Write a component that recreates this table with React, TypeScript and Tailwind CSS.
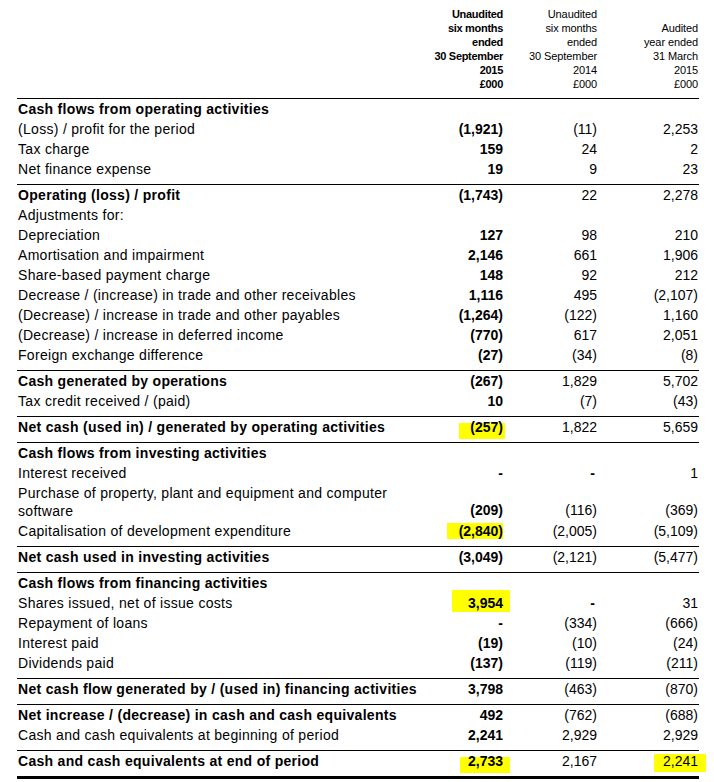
import React from 'react'

type Row = { label: React.ReactNode; bold?: boolean; v?: string[]; hl?: (string | null)[]; tall?: boolean }

const cols = 'grid grid-cols-[396px_90px_94px_102px]'

const groups: Row[][] = [
  [
    { label: 'Cash flows from operating activities', bold: true },
    { label: '(Loss) / profit for the period', v: ['(1,921)', '(11)', '2,253'] },
    { label: 'Tax charge', v: ['159', '24', '2'] },
    { label: 'Net finance expense', v: ['19', '9', '23'] },
  ],
  [
    { label: 'Operating (loss) / profit', bold: true, v: ['(1,743)', '22', '2,278'] },
    { label: 'Adjustments for:' },
    { label: 'Depreciation', v: ['127', '98', '210'] },
    { label: 'Amortisation and impairment', v: ['2,146', '661', '1,906'] },
    { label: 'Share-based payment charge', v: ['148', '92', '212'] },
    { label: 'Decrease / (increase) in trade and other receivables', v: ['1,116', '495', '(2,107)'] },
    { label: '(Decrease) / increase in trade and other payables', v: ['(1,264)', '(122)', '1,160'] },
    { label: '(Decrease) / increase in deferred income', v: ['(770)', '617', '2,051'] },
    { label: 'Foreign exchange difference', v: ['(27)', '(34)', '(8)'] },
  ],
  [
    { label: 'Cash generated by operations', bold: true, v: ['(267)', '1,829', '5,702'] },
    { label: 'Tax credit received / (paid)', v: ['10', '(7)', '(43)'] },
  ],
  [
    {
      label: 'Net cash (used in) / generated by operating activities', bold: true, v: ['(257)', '1,822', '5,659'],
      hl: ['top-[6px] h-[16px] right-[-2px] w-[46px]', null, null],
    },
  ],
  [
    { label: 'Cash flows from investing activities', bold: true },
    { label: 'Interest received', v: ['-', '-', '1'] },
    { label: <>Purchase of property, plant and equipment and computer<br />software</>, tall: true, v: ['(209)', '(116)', '(369)'] },
    {
      label: 'Capitalisation of development expenditure', v: ['(2,840)', '(2,005)', '(5,109)'],
      hl: ['top-[2px] h-[16px] right-0 w-[56px]', null, null],
    },
  ],
  [
    { label: 'Net cash used in investing activities', bold: true, v: ['(3,049)', '(2,121)', '(5,477)'] },
  ],
  [
    { label: 'Cash flows from financing activities', bold: true },
    {
      label: 'Shares issued, net of issue costs', v: ['3,954', '-', '31'],
      hl: ['top-[-3px] h-[22px] right-[-7px] w-[58px]', null, null],
    },
    { label: 'Repayment of loans', v: ['-', '(334)', '(666)'] },
    { label: 'Interest paid', v: ['(19)', '(10)', '(24)'] },
    { label: 'Dividends paid', v: ['(137)', '(119)', '(211)'] },
  ],
  [
    { label: 'Net cash flow generated by / (used in) financing activities', bold: true, v: ['3,798', '(463)', '(870)'] },
  ],
  [
    { label: 'Net increase / (decrease) in cash and cash equivalents', bold: true, v: ['492', '(762)', '(688)'] },
    { label: 'Cash and cash equivalents at beginning of period', v: ['2,241', '2,929', '2,929'] },
  ],
  [
    {
      label: 'Cash and cash equivalents at end of period', bold: true, v: ['2,733', '2,167', '2,241'],
      hl: ['top-[6px] h-[16px] right-[-7px] w-[50px]', null, 'top-[3px] h-[18px] right-[-7px] w-[52px]'],
    },
  ],
]

const heads = [
  ['Unaudited', 'six months', 'ended', '30 September', '2015', '£000'],
  ['Unaudited', 'six months', 'ended', '30 September', '2014', '£000'],
  ['Audited', 'year ended', '31 March', '2015', '£000'],
]

function Value({ text, i, hl, tall }: { text: string; i: number; hl?: string | null; tall?: boolean }) {
  // dashes print bold in every column of the source
  const bold = i === 0 || text === '-'
  return (
    <div className={`relative text-right ${bold ? 'font-bold' : ''} ${i === 2 ? 'pr-[1px]' : ''} ${text === '-' && i > 0 ? 'pr-[2px]' : ''} ${tall ? 'self-end leading-[18px] pb-[1px]' : ''}`}>
      {hl && <span className={`absolute bg-[#ffff00] ${hl}`} />}
      <span className="relative">{text}</span>
    </div>
  )
}

export default function App() {
  return (
    <div className="w-[714px] h-[782px] bg-white text-black font-['Liberation_Sans',Arial,sans-serif] overflow-hidden">
      <div className="ml-[17px] w-[682px]">
        <div className={`${cols} items-end border-b border-black pt-[7px] pb-[7px] text-[11px] leading-[14px]`}>
          <div />
          {heads.map((h, i) => (
            <div key={i} className={`text-right ${i === 0 ? 'font-bold tracking-[-0.3px]' : 'tracking-[-0.1px]'} ${i === 2 ? 'pr-[1px]' : ''}`}>
              {h.map((l) => <div key={l}>{l}</div>)}
            </div>
          ))}
        </div>
        {groups.map((g, gi) => (
          <div key={gi} className={`pb-[5px] border-black ${gi === groups.length - 1 ? 'border-b-[3px]' : 'border-b'}`}>
            {g.map((r, ri) => (
              <div key={ri} className={`${cols} text-[14px] ${r.tall ? 'leading-[18px] py-[1px]' : 'h-[20px] leading-[20px]'}`}>
                <div className={`pl-[1px] tracking-[0.3px] whitespace-nowrap ${r.bold ? 'font-bold' : ''}`}>{r.label}</div>
                {(r.v ?? ['', '', '']).map((t, i) => (
                  <Value key={i} text={t} i={i} hl={r.hl?.[i]} tall={r.tall} />
                ))}
              </div>
            ))}
          </div>
        ))}
      </div>
    </div>
  )
}
